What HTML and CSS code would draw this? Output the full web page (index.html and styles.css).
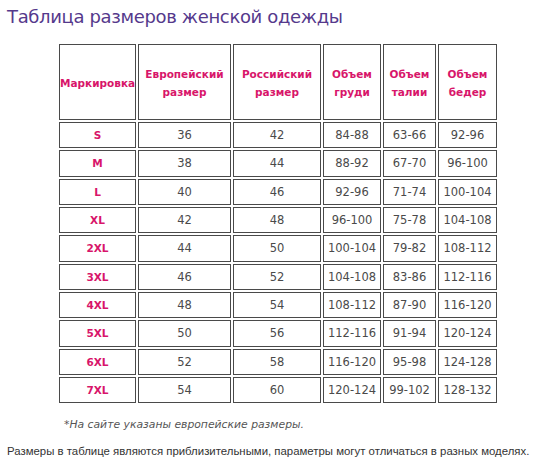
FILE: index.html
```html
<!DOCTYPE html>
<html lang="ru">
<head>
<meta charset="utf-8">
<title>Таблица размеров женской одежды</title>
<link rel="stylesheet" href="styles.css">
</head>
<body>
<h1 class="title">Таблица размеров женской одежды</h1>
<table class="sizes">
  <colgroup>
    <col class="c1"><col class="c2"><col class="c3"><col class="c4"><col class="c5"><col class="c6">
  </colgroup>
  <thead>
    <tr class="head">
      <th>Маркировка</th>
      <th>Европейский<br>размер</th>
      <th>Российский<br>размер</th>
      <th>Объем<br>груди</th>
      <th>Объем<br>талии</th>
      <th>Объем<br>бедер</th>
    </tr>
  </thead>
  <tbody>
    <tr><th>S</th><td>36</td><td>42</td><td>84-88</td><td>63-66</td><td>92-96</td></tr>
    <tr><th>M</th><td>38</td><td>44</td><td>88-92</td><td>67-70</td><td>96-100</td></tr>
    <tr><th>L</th><td>40</td><td>46</td><td>92-96</td><td>71-74</td><td>100-104</td></tr>
    <tr><th>XL</th><td>42</td><td>48</td><td>96-100</td><td>75-78</td><td>104-108</td></tr>
    <tr><th>2XL</th><td>44</td><td>50</td><td>100-104</td><td>79-82</td><td>108-112</td></tr>
    <tr><th>3XL</th><td>46</td><td>52</td><td>104-108</td><td>83-86</td><td>112-116</td></tr>
    <tr><th>4XL</th><td>48</td><td>54</td><td>108-112</td><td>87-90</td><td>116-120</td></tr>
    <tr><th>5XL</th><td>50</td><td>56</td><td>112-116</td><td>91-94</td><td>120-124</td></tr>
    <tr><th>6XL</th><td>52</td><td>58</td><td>116-120</td><td>95-98</td><td>124-128</td></tr>
    <tr><th>7XL</th><td>54</td><td>60</td><td>120-124</td><td>99-102</td><td>128-132</td></tr>
  </tbody>
</table>
<p class="note">*На сайте указаны европейские размеры.</p>
<p class="disclaimer">Размеры в таблице являются приблизительными, параметры могут отличаться в разных моделях.</p>
</body>
</html>
```
FILE: styles.css
```css
html, body {
  margin: 0;
  padding: 0;
  background: #ffffff;
}

body {
  width: 540px;
  height: 467px;
  overflow: hidden;
  font-family: "DejaVu Sans", sans-serif;
}

.title {
  margin: 0;
  padding: 4px 0 0 7px;
  font-size: 18px;
  letter-spacing: -0.35px;
  line-height: 26px;
  font-weight: normal;
  color: #55398c;
}

.sizes {
  margin: 12px 0 0 57px;
  border-collapse: separate;
  border-spacing: 2px;
  table-layout: fixed;
  width: 442px;
}

.c1 { width: 77px; }
.c2 { width: 93px; }
.c3 { width: 88px; }
.c4 { width: 58px; }
.c5 { width: 53px; }
.c6 { width: 59px; }

.sizes th,
.sizes td {
  border: 1px solid #4a4a4a;
  padding: 0;
  text-align: center;
  vertical-align: middle;
}

.sizes th {
  color: #d8156a;
  font-weight: bold;
  font-size: 10.5px;
}

.sizes .head th {
  line-height: 18px;
  padding-top: 2px;
}

.sizes td {
  color: #4a4a4a;
  font-size: 11.5px;
}

.head {
  height: 76px;
}

.sizes tbody tr {
  height: 26.33px;
}

.note {
  margin: 12px 0 0 64px;
  font-family: "DejaVu Sans", sans-serif;
  font-style: italic;
  font-size: 10.8px;
  color: #555555;
  line-height: 16px;
}

.disclaimer {
  margin: 10px 0 0 7px;
  font-family: "Liberation Sans", Arial, sans-serif;
  font-size: 11.4px;
  color: #333333;
  line-height: 16px;
  white-space: nowrap;
}
```
